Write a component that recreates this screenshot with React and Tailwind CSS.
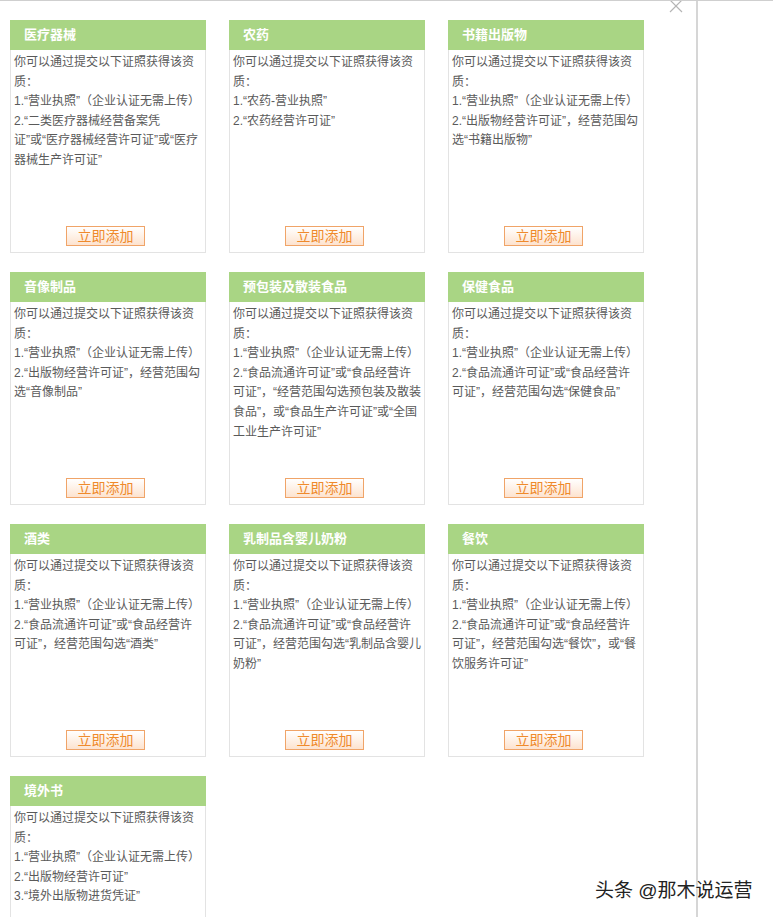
const intro = ["你可以通过提交以下证照获得该资", "质："];
const license = ["1.“营业执照”（企业认证无需上传）"];
const foodA = "2.“食品流通许可证”或“食品经营许";

const cards = [
  { title: "医疗器械", items: [intro, license, ["2.“二类医疗器械经营备案凭", "证”或“医疗器械经营许可证”或“医疗", "器械生产许可证”"]] },
  { title: "农药", items: [intro, ["1.“农药-营业执照”"], ["2.“农药经营许可证”"]] },
  { title: "书籍出版物", items: [intro, license, ["2.“出版物经营许可证”，经营范围勾", "选“书籍出版物”"]] },
  { title: "音像制品", items: [intro, license, ["2.“出版物经营许可证”，经营范围勾", "选“音像制品”"]] },
  { title: "预包装及散装食品", items: [intro, license, [foodA, "可证”，“经营范围勾选预包装及散装", "食品”，或“食品生产许可证”或“全国", "工业生产许可证”"]] },
  { title: "保健食品", items: [intro, license, [foodA, "可证”，经营范围勾选“保健食品”"]] },
  { title: "酒类", items: [intro, license, [foodA, "可证”，经营范围勾选“酒类”"]] },
  { title: "乳制品含婴儿奶粉", items: [intro, license, [foodA, "可证”，经营范围勾选“乳制品含婴儿", "奶粉”"]] },
  { title: "餐饮", items: [intro, license, [foodA, "可证”，经营范围勾选“餐饮”，或“餐", "饮服务许可证”"]] },
  { title: "境外书", items: [intro, license, ["2.“出版物经营许可证”"], ["3.“境外出版物进货凭证”"]] },
];

function Card({ title, items }) {
  return (
    <div className="flex h-[233px] w-[196px] flex-col border border-[#e3e3e3] bg-white">
      <div className="-mx-px -mt-px flex h-[30px] items-center bg-[#a9d584] pl-[14px] text-[13px] font-bold text-white">
        {title}
      </div>
      <div className="flex-1 overflow-hidden px-[3px] pt-[3px] text-[12px] leading-[19.6px] text-[#5a5a5a] [text-spacing-trim:space-all]">
        {items.map((lines, i) => (
          <div key={i}>
            {lines.map((l, j) => (
              <div key={j} className="whitespace-nowrap">{l}</div>
            ))}
          </div>
        ))}
      </div>
      <div className="flex justify-center pb-[6px] pr-[5px]">
        <button className="h-[20px] w-[79px] border border-[#f0a468] bg-gradient-to-b from-white to-[#fde3cf] text-[14px] leading-[18px] text-[#ef8a2c]">
          立即添加
        </button>
      </div>
    </div>
  );
}

export default function App() {
  return (
    <div className="relative h-[917px] w-[773px] overflow-hidden border-t border-[#cfcfcf] bg-white font-['Liberation_Sans','Noto_Sans_CJK_SC',sans-serif]">
      <div className="relative h-full w-[698px] border-r-2 border-[#d6d6d6]">
        <svg className="absolute right-[13px] top-[-2px]" width="14" height="14" viewBox="0 0 14 14">
          <path d="M1 1 L13 13 M13 1 L1 13" stroke="#b5b5b5" strokeWidth="1.2" fill="none" />
        </svg>
        <div className="grid grid-cols-[196px_196px_196px] gap-x-[23px] gap-y-[19px] pl-[10px] pt-[19px]">
          {cards.map((c) => (
            <Card key={c.title} {...c} />
          ))}
        </div>
      </div>
      <div className="absolute left-[595px] top-[878px] text-[19px] leading-[24px] text-[#222] [text-shadow:0_0_2px_#fff,0_0_2px_#fff]">
        头条 @那木说运营
      </div>
    </div>
  );
}
